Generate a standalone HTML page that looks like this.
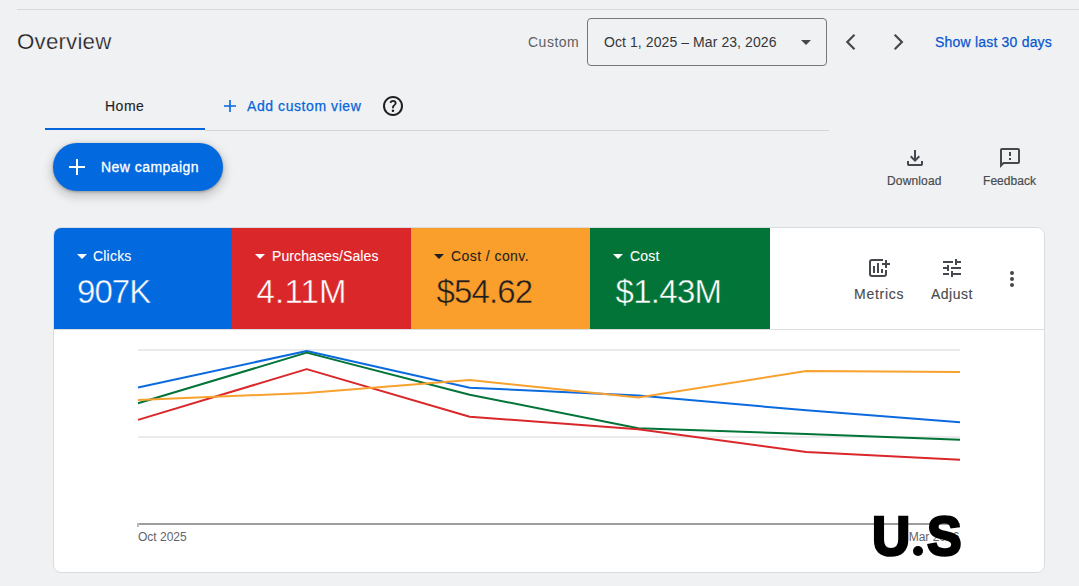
<!DOCTYPE html>
<html><head><meta charset="utf-8">
<style>
*{box-sizing:border-box;margin:0;padding:0}
html,body{width:1079px;height:586px;overflow:hidden;background:#f0f1f3;font-family:"Liberation Sans",sans-serif;color:#1f1f1f}
.a{position:absolute;white-space:nowrap}
.med{-webkit-text-stroke:0.25px currentColor}
</style></head><body>
<div class="a" style="left:17px;top:9px;width:1062px;height:1px;background:#d7d9dc"></div>
<div class="a" style="left:17px;top:29px;font-size:22.3px;line-height:26px;color:#1f1f1f;letter-spacing:0.2px;-webkit-text-stroke:0.25px #f0f1f3">Overview</div>

<div class="a" style="left:528px;top:34px;font-size:14px;line-height:16px;color:#5e6064;letter-spacing:0.5px">Custom</div>
<div class="a" style="left:587px;top:18px;width:240px;height:48px;border:1px solid #747775;border-radius:4px"></div>
<div class="a" style="left:604px;top:34px;font-size:14px;line-height:16px;color:#34373a;letter-spacing:0.08px">Oct 1, 2025 – Mar 23, 2026</div>
<svg class="a" style="left:800.5px;top:40px" width="10" height="5" viewBox="0 0 10 5"><path d="M0 0h10L5 5z" fill="#45484c"/></svg>
<svg class="a" style="left:0;top:0" width="1079" height="60"><g fill="none" stroke="#45484c" stroke-width="2.2" stroke-linejoin="miter"><polyline points="854.5,34.8 847.3,42 854.5,49.2"/><polyline points="894.7,34.8 901.9,42 894.7,49.2"/></g></svg>

<div class="a med" style="left:935px;top:34px;font-size:14px;line-height:16px;color:#0b57d0;letter-spacing:0.2px">Show last 30 days</div>

<div class="a" style="left:105px;top:98px;font-size:14px;line-height:16px;color:#1f1f1f;letter-spacing:0.5px;-webkit-text-stroke:0.15px #1f1f1f">Home</div>
<div class="a" style="left:45px;top:128px;width:160px;height:2px;background:#0566dc"></div>
<div class="a" style="left:205px;top:130px;width:624px;height:1px;background:#d3d5d8"></div>
<svg class="a" style="left:224px;top:100px" width="12" height="12" viewBox="0 0 12 12"><path d="M5.2 0h1.6v5.2H12v1.6H6.8V12H5.2V6.8H0V5.2h5.2z" fill="#0566dc"/></svg>
<div class="a med" style="left:247px;top:98px;font-size:14px;line-height:16px;color:#0566dc;letter-spacing:0.57px">Add custom view</div>
<svg class="a" style="left:381px;top:94px" width="24" height="24" viewBox="0 -960 960 960"><path fill="#1f1f1f" d="M478-240q21 0 35.5-14.5T528-290q0-21-14.5-35.5T478-340q-21 0-35.5 14.5T428-290q0 21 14.5 35.5T478-240Zm-36-154h74q0-33 7.5-52t42.5-52q26-26 41-49.5t15-56.5q0-56-41-86t-97-30q-57 0-92.5 30T342-618l66 26q5-18 22.5-39t53.5-21q32 0 48 17.5t16 38.5q0 20-12 37.5T506-526q-44 39-54 59t-10 73Zm38 314q-83 0-156-31.5T197-197q-54-54-85.5-127T80-480q0-83 31.5-156T197-763q54-54 127-85.5T480-880q83 0 156 31.5T763-763q54 54 85.5 127T880-480q0 83-31.5 156T763-197q-54 54-127 85.5T480-80Zm0-80q134 0 227-93t93-227q0-134-93-227t-227-93q-134 0-227 93t-93 227q0 134 93 227t227 93Zm0-320Z"/></svg>

<div class="a" style="left:53px;top:143px;width:170px;height:48px;border-radius:24px;background:#026ade;box-shadow:0 1px 3px rgba(0,0,0,.3),0 4px 8px 3px rgba(0,0,0,.15)"></div>
<svg class="a" style="left:69px;top:159px" width="16" height="16" viewBox="0 0 16 16"><path d="M7 0h2v7h7v2H9v7H7V9H0V7h7z" fill="#fff"/></svg>
<div class="a" style="left:101px;top:159px;font-size:14px;line-height:16px;color:#fff;-webkit-text-stroke:0.3px #fff;letter-spacing:0.45px">New campaign</div>

<svg class="a" style="left:903px;top:146px" width="24" height="24" viewBox="0 -960 960 960"><path fill="#45484c" d="M480-320 280-520l56-58 104 104v-326h80v326l104-104 56 58-200 200ZM240-160q-33 0-56.5-23.5T160-240v-120h80v120h480v-120h80v120q0 33-23.5 56.5T720-160H240Z"/></svg>
<div class="a" style="left:887px;top:174px;font-size:12px;line-height:14px;color:#4a4c4e;letter-spacing:0.15px;-webkit-text-stroke:0.2px #4a4c4e">Download</div>
<svg class="a" style="left:998px;top:146px" width="24" height="24" viewBox="0 0 24 24"><path fill="#45484c" d="M20 2H4c-1.1 0-1.99.9-1.99 2L2 22l4-4h14c1.1 0 2-.9 2-2V4c0-1.1-.9-2-2-2zm0 14H5.17l-.59.59-.58.58V4h16v12zm-9-4h2v2h-2zm0-6h2v4h-2z"/></svg>
<div class="a" style="left:983px;top:174px;font-size:12px;line-height:14px;color:#4a4c4e;letter-spacing:0.05px;-webkit-text-stroke:0.2px #4a4c4e">Feedback</div>

<!-- card -->
<div class="a" style="left:53px;top:227px;width:992px;height:346px;background:#fff;border:1px solid #dadce0;border-radius:8px;overflow:hidden">
  <div class="a" style="left:0;top:0;width:178px;height:101px;background:#026ade"></div>
  <div class="a" style="left:178px;top:0;width:179px;height:101px;background:#d9272a"></div>
  <div class="a" style="left:357px;top:0;width:179px;height:101px;background:#fb9f2c"></div>
  <div class="a" style="left:536px;top:0;width:180px;height:101px;background:#037437"></div>
  <div class="a" style="left:0;top:101px;width:992px;height:1px;background:#dadce0"></div>
</div>
<!-- tile texts -->
<svg class="a" style="left:77px;top:254px" width="10" height="5" viewBox="0 0 10 5"><path d="M0 0h10L5 5z" fill="#fff"/></svg>
<div class="a" style="left:93px;top:248px;font-size:14px;line-height:16px;color:#fff;letter-spacing:0.2px;-webkit-text-stroke:0.1px #fff">Clicks</div>
<div class="a" style="left:77px;top:274px;font-size:33px;line-height:36px;letter-spacing:-0.95px;color:#fff;-webkit-text-stroke:0.45px #026ade">907K</div>

<svg class="a" style="left:255px;top:254px" width="10" height="5" viewBox="0 0 10 5"><path d="M0 0h10L5 5z" fill="#fff"/></svg>
<div class="a" style="left:272px;top:248px;font-size:14px;line-height:16px;color:#fff;letter-spacing:0.1px;-webkit-text-stroke:0.1px #fff">Purchases/Sales</div>
<div class="a" style="left:256.5px;top:274px;font-size:33px;line-height:36px;letter-spacing:0.2px;color:#fff;-webkit-text-stroke:0.45px #d9272a">4.11M</div>

<svg class="a" style="left:434px;top:254px" width="10" height="5" viewBox="0 0 10 5"><path d="M0 0h10L5 5z" fill="#1f1f1f"/></svg>
<div class="a" style="left:451px;top:248px;font-size:14px;line-height:16px;color:#1f1f1f;letter-spacing:0.43px;-webkit-text-stroke:0.1px #1f1f1f">Cost / conv.</div>
<div class="a" style="left:436.5px;top:274px;font-size:33px;line-height:36px;letter-spacing:-0.85px;color:#1f1f1f;-webkit-text-stroke:0.45px #fb9f2c">$54.62</div>

<svg class="a" style="left:613px;top:254px" width="10" height="5" viewBox="0 0 10 5"><path d="M0 0h10L5 5z" fill="#fff"/></svg>
<div class="a" style="left:630px;top:248px;font-size:14px;line-height:16px;color:#fff;letter-spacing:0.2px;-webkit-text-stroke:0.1px #fff">Cost</div>
<div class="a" style="left:615.5px;top:274px;font-size:33px;line-height:36px;letter-spacing:-0.7px;color:#fff;-webkit-text-stroke:0.45px #037437">$1.43M</div>

<!-- metrics / adjust / more -->
<svg class="a" style="left:866px;top:256px" width="24" height="24" viewBox="0 0 24 24"><path d="M17 4H6a2 2 0 0 0-2 2v12a2 2 0 0 0 2 2h12a2 2 0 0 0 2-2v-4" fill="none" stroke="#45484c" stroke-width="2"/><g fill="#45484c"><rect x="7" y="10" width="2" height="7"/><rect x="11" y="7" width="2" height="10"/><rect x="15" y="13" width="2" height="4"/><rect x="16" y="7" width="8" height="2"/><rect x="19" y="4" width="2" height="8"/></g></svg>
<div class="a" style="left:854px;top:286px;font-size:14px;line-height:16px;color:#4a4c4e;letter-spacing:0.75px;-webkit-text-stroke:0.15px #4a4c4e">Metrics</div>
<svg class="a" style="left:940px;top:256px" width="24" height="24" viewBox="0 -960 960 960"><path fill="#45484c" d="M440-120v-240h80v80h320v80H520v80h-80Zm-320-80v-80h240v80H120Zm160-160v-80H120v-80h160v-80h80v240h-80Zm160-80v-80h400v80H440Zm160-160v-240h80v80h160v80H680v80h-80Zm-480-80v-80h400v80H120Z"/></svg>
<div class="a" style="left:931px;top:286px;font-size:14px;line-height:16px;color:#4a4c4e;letter-spacing:0.5px;-webkit-text-stroke:0.15px #4a4c4e">Adjust</div>
<svg class="a" style="left:1000px;top:267px" width="24" height="24" viewBox="0 0 24 24"><g fill="#45484c"><circle cx="12" cy="6" r="2"/><circle cx="12" cy="12" r="2"/><circle cx="12" cy="18" r="2"/></g></svg>

<!-- chart -->
<svg class="a" style="left:0;top:0" width="1079" height="586" viewBox="0 0 1079 586">
  <rect x="138" y="349" width="822" height="2" fill="#ebebeb"/>
  <rect x="138" y="436" width="822" height="2" fill="#ebebeb"/>
  <g fill="none" stroke-width="2" stroke-linejoin="round" stroke-linecap="butt">
    <polyline stroke="#0b6bde" points="138,387.4 306.7,351 469.7,387.7 638.2,395.5 806.3,410.3 960,422.3"/>
    <polyline stroke="#037437" points="138,403.3 306.7,352.6 469.7,394.7 638.2,428.2 806.3,434.1 960,439.7"/>
    <polyline stroke="#d9272a" points="138,419.9 306.7,369.1 469.7,416.7 638.2,429.3 806.3,452 960,459.8"/>
  <polyline stroke="#f9a12e" points="138,400 306.7,393 469.7,380 638.2,397.5 806.3,371 960,372"/>
  </g>
  <rect x="138" y="523" width="822" height="2" fill="#9e9e9e"/><rect x="137" y="523" width="2" height="4" fill="#bdbdbd"/>
</svg>
<div class="a" style="left:138px;top:530px;font-size:12px;line-height:14px;color:#5f6368">Oct 2025</div>

<div class="a" style="left:908.7px;top:530px;font-size:12px;line-height:14px;color:#5f6368">Mar 2026</div>
<div class="a" style="left:872px;top:503px;font-size:55.8px;line-height:66px;color:#000;font-weight:bold;-webkit-text-stroke:2.6px #000;transform:scaleX(0.95);transform-origin:0 0">U</div>
<div class="a" style="left:912.8px;top:546px;width:10.4px;height:10.4px;border-radius:50%;background:#000"></div>
<div class="a" style="left:927px;top:503px;font-size:55.8px;line-height:66px;color:#000;font-weight:bold;-webkit-text-stroke:2.6px #000;transform:scaleX(0.93);transform-origin:0 0">S</div>
</body></html>
